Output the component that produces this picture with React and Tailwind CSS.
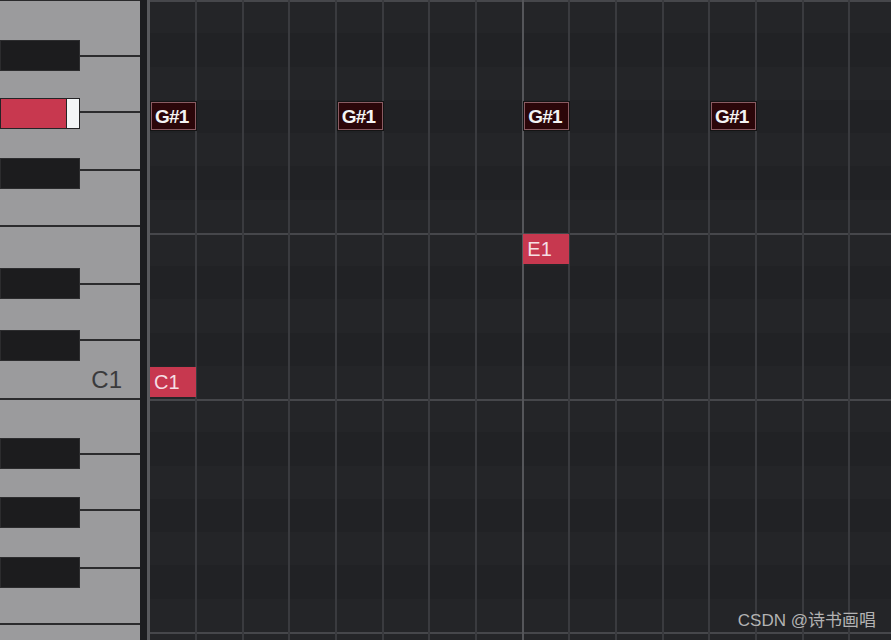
import React from 'react';

const FONT = '"Liberation Sans", "Noto Sans CJK SC", Arial, sans-serif';
const ROW = 33.25;
const COL = 46.67;

// white keys, top to bottom: height in px
const whiteKeys = [
  { name: 'B1', h: 56 },
  { name: 'A1', h: 56 },
  { name: 'G1', h: 58 },
  { name: 'F1', h: 56 },
  { name: 'E1', h: 58 },
  { name: 'D1', h: 56 },
  { name: 'C1', h: 59, label: true },
  { name: 'B0', h: 55 },
  { name: 'A0', h: 56 },
  { name: 'G0', h: 58 },
  { name: 'F0', h: 56 },
  { name: 'E0', h: 60 },
];

// black keys: top offset in px
const blackKeys = [
  { name: 'A#1', top: 40 },
  { name: 'G#1', top: 98, active: true },
  { name: 'F#1', top: 158 },
  { name: 'D#1', top: 268 },
  { name: 'C#1', top: 330 },
  { name: 'A#0', top: 438 },
  { name: 'G#0', top: 497 },
  { name: 'F#0', top: 557 },
];

// semitone rows of the roll, top to bottom
const rows = ['B1', 'A#1', 'A1', 'G#1', 'G1', 'F#1', 'F1', 'E1', 'D#1', 'D1', 'C#1', 'C1', 'B0', 'A#0', 'A0', 'G#0', 'G0', 'F#0', 'F0', 'E0'];
const octaveLine = { B1: true, E1: true, B0: true, E0: true };

const notes = [
  { pitch: 'G#1', col: 0, kind: 'ghost' },
  { pitch: 'G#1', col: 4, kind: 'ghost' },
  { pitch: 'G#1', col: 8, kind: 'ghost' },
  { pitch: 'G#1', col: 12, kind: 'ghost' },
  { pitch: 'E1', col: 8, kind: 'live' },
  { pitch: 'C1', col: 0, kind: 'live' },
];

function Keyboard() {
  return (
    <div className="relative w-[140px] h-full shrink-0 bg-[#2a2a2c] pt-[1px]">
      <div className="flex flex-col">
        {whiteKeys.map((k) => (
          <div
            key={k.name}
            style={{ height: k.h }}
            className="bg-[#9b9b9d] border-b-2 border-[#2b2b2d] flex items-end justify-end pr-[18px] pb-[6px]"
          >
            {k.label && <span className="text-[24px] leading-none text-[#3a3a3c]">C1</span>}
          </div>
        ))}
      </div>
      {blackKeys.map((k) =>
        k.active ? (
          <div key={k.name} style={{ top: k.top }} className="absolute left-0 w-[80px] h-[31px] flex border border-[#242426]">
            <div className="flex-1 bg-[#c8384f]" />
            <div className="w-[13px] bg-[#f3f5f7] border-l border-[#242426]" />
          </div>
        ) : (
          <div key={k.name} style={{ top: k.top }} className="absolute left-0 w-[80px] h-[31px] bg-[#1c1c1e] border border-[#2c2c2e]" />
        )
      )}
    </div>
  );
}

function Note({ n }) {
  const top = rows.indexOf(n.pitch) * ROW + 1.5;
  const left = n.col * COL;
  if (n.kind === 'ghost') {
    return (
      <div style={{ top, left }} className="absolute h-[30px] w-[47px] border border-[#141414] bg-[#141414]">
        <div className="h-full w-full border border-[#8a5b62] bg-[#2b0609] flex items-center pl-[3px]">
          <span className="text-[19px] leading-none font-bold text-[#f4f4f4] tracking-[-0.8px]">{n.pitch}</span>
        </div>
      </div>
    );
  }
  return (
    <div style={{ top, left }} className="absolute h-[30px] w-[46px] bg-[#c7384f] flex items-center pl-[4px]">
      <span className="text-[20px] leading-none text-[#f5dfe4]">{n.pitch}</span>
    </div>
  );
}

function Roll() {
  return (
    <div className="relative flex-1 h-full overflow-hidden bg-[#232427]">
      <div className="flex flex-col">
        {rows.map((r) => (
          <div
            key={r}
            style={{ height: ROW }}
            className={
              (r.includes('#') ? 'bg-[#212225] ' : 'bg-[#242528] ') +
              (octaveLine[r] ? 'border-t-2 border-[#46474b]' : '')
            }
          />
        ))}
      </div>
      <div className="absolute inset-0 flex pointer-events-none">
        {Array.from({ length: 16 }).map((_, i) => (
          <div
            key={i}
            style={{ width: i === 0 ? COL - 1.5 : COL }}
            className={
              'shrink-0 h-full ' +
              (i === 0 ? '' : i === 8 ? 'border-l-2 border-[#55565a]' : 'border-l-2 border-[#3a3b3f]')
            }
          />
        ))}
      </div>
      {notes.map((n, i) => (
        <Note key={i} n={n} />
      ))}
    </div>
  );
}

export default function App() {
  return (
    <div className="relative w-[891px] h-[640px] flex overflow-hidden bg-[#1f2023]" style={{ fontFamily: FONT }}>
      <Keyboard />
      <div className="w-[7px] h-full shrink-0 bg-[#1c1d20]" />
      <div className="w-[3px] h-full shrink-0 bg-[#58595d]" />
      <Roll />
      <div className="absolute right-[15px] bottom-[9px] text-[17px] leading-[20px] text-[#b3b3b3]">CSDN @诗书画唱</div>
    </div>
  );
}
